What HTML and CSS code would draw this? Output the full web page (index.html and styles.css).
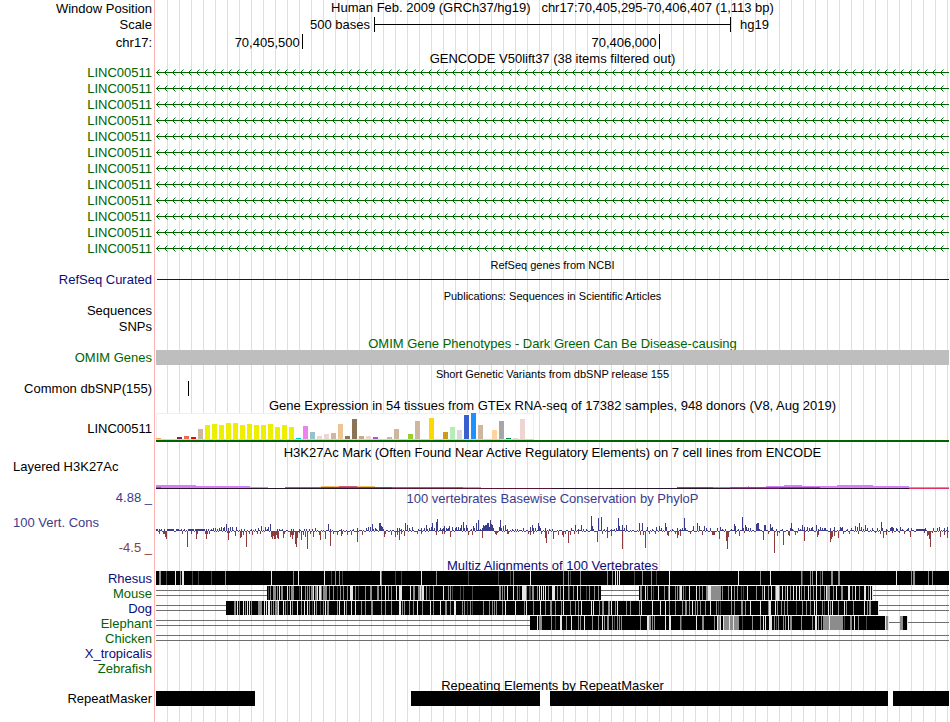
FILE: index.html
```html
<!DOCTYPE html>
<html lang="en">
<head>
  <meta charset="UTF-8">
  <meta name="viewport" content="width=device-width, initial-scale=1.0">
  <title>Human hg19 chr17:70,405,295-70,406,407</title>
  <link rel="stylesheet" href="styles.css">
</head>
<body>
  <!-- Shared gene model line -->
  <svg class="defs" aria-hidden="true">
    <defs>
      <pattern id="chevrons" x="155" y="0" width="8" height="16" patternUnits="userSpaceOnUse">
        <path d="M2 7h1v3h-1zM3 6h1v1h-1zM3 10h1v1h-1z" fill="#006400"/>
        <path d="M4 5h1v1h-1zM4 11h1v1h-1z" fill="#78b478"/>
      </pattern>
      <symbol id="intron" viewBox="156 0 793 16" preserveAspectRatio="none">
        <rect x="156" y="0" width="793" height="16" fill="url(#chevrons)"/>
        <rect x="156" y="8" width="793" height="1" fill="#006400"/>
      </symbol>
    </defs>
  </svg>

  <main class="browser">
    <!-- Ruler -->
    <div class="row position-row">
      <div class="label">Window Position</div>
      <div class="title">Human Feb. 2009 (GRCh37/hg19) &nbsp; chr17:70,405,295-70,406,407 (1,113 bp)</div>
    </div>
    <div class="row scale-row">
      <div class="label">Scale</div>
      <div class="scale">
        <span class="scale-size">500 bases</span>
        <span class="scale-bar"></span>
        <span class="scale-db">hg19</span>
      </div>
    </div>
    <div class="row chrom-row">
      <div class="label">chr17:</div>
      <div class="chrom">
        <span class="tick tick-first">70,405,500</span>
        <span class="tick tick-second">70,406,000</span>
      </div>
    </div>

    <!-- GENCODE -->
    <div class="row gencode-title">
      <div class="title">GENCODE V50lift37 (38 items filtered out)</div>
    </div>
    <div id="gencode"></div>

    <!-- RefSeq -->
    <div class="row title-row tight">
      <div class="title small">RefSeq genes from NCBI</div>
    </div>
    <div class="row gene-row">
      <div class="label navy">RefSeq Curated</div>
      <svg viewBox="156 0 793 16" preserveAspectRatio="none"><rect x="157" y="8" width="792" height="1" fill="#0c0c78"/></svg>
    </div>

    <!-- Publications -->
    <div class="row title-row tight">
      <div class="title small">Publications: Sequences in Scientific Articles</div>
    </div>
    <div class="row gene-row"><div class="label">Sequences</div></div>
    <div class="row gene-row"><div class="label">SNPs</div></div>

    <!-- OMIM -->
    <div class="row title-row">
      <div class="title green">OMIM Gene Phenotypes - Dark Green Can Be Disease-causing</div>
    </div>
    <div class="row item-row">
      <div class="label green">OMIM Genes</div>
      <div class="omim-bar"></div>
    </div>

    <!-- dbSNP -->
    <div class="row title-row">
      <div class="title small">Short Genetic Variants from dbSNP release 155</div>
    </div>
    <div class="row item-row">
      <div class="label">Common dbSNP(155)</div>
      <svg viewBox="156 0 793 15" preserveAspectRatio="none"><rect x="188" y="0" width="1" height="15"/></svg>
    </div>

    <!-- GTEx -->
    <div class="row title-row loose">
      <div class="title">Gene Expression in 54 tissues from GTEx RNA-seq of 17382 samples, 948 donors (V8, Aug 2019)</div>
    </div>
    <div class="row gtex-row">
      <div class="label">LINC00511</div>
      <svg id="gtex" viewBox="156 0 793 29" preserveAspectRatio="none"></svg>
    </div>

    <!-- H3K27Ac -->
    <div class="row title-row h3k-title">
      <div class="title">H3K27Ac Mark (Often Found Near Active Regulatory Elements) on 7 cell lines from ENCODE</div>
    </div>
    <div class="row h3k-row">
      <div class="label left">Layered H3K27Ac</div>
      <svg id="h3k27ac" viewBox="156 0 793 29" preserveAspectRatio="none"></svg>
    </div>

    <!-- Conservation -->
    <div class="row title-row loose">
      <div class="label blue">4.88 _</div>
      <div class="title blue">100 vertebrates Basewise Conservation by PhyloP</div>
    </div>
    <div class="row phylop-row">
      <div class="phylop-labels">
        <div class="label left blue">100 Vert. Cons</div>
        <div class="label red">-4.5 _</div>
      </div>
      <svg id="phylop" viewBox="156 0 793 50" preserveAspectRatio="none"></svg>
    </div>

    <!-- Multiz -->
    <div class="row title-row tight">
      <div class="title navy">Multiz Alignments of 100 Vertebrates</div>
    </div>
    <div class="row item-row">
      <div class="label navy">Rhesus</div>
      <svg id="rhesus" viewBox="156 0 793 15" preserveAspectRatio="none"></svg>
    </div>
    <div class="row item-row">
      <div class="label green">Mouse</div>
      <svg id="mouse" viewBox="156 0 793 15" preserveAspectRatio="none"></svg>
    </div>
    <div class="row item-row">
      <div class="label navy">Dog</div>
      <svg id="dog" viewBox="156 0 793 15" preserveAspectRatio="none"></svg>
    </div>
    <div class="row item-row">
      <div class="label green">Elephant</div>
      <svg id="elephant" viewBox="156 0 793 15" preserveAspectRatio="none"></svg>
    </div>
    <div class="row item-row">
      <div class="label green">Chicken</div>
      <svg id="chicken" viewBox="156 0 793 15" preserveAspectRatio="none"></svg>
    </div>
    <div class="row item-row"><div class="label navy">X_tropicalis</div></div>
    <div class="row item-row"><div class="label green">Zebrafish</div></div>

    <!-- RepeatMasker -->
    <div class="row title-row tight">
      <div class="title">Repeating Elements by RepeatMasker</div>
    </div>
    <div class="row item-row">
      <div class="label">RepeatMasker</div>
      <svg viewBox="156 0 793 15" preserveAspectRatio="none">
        <path d="M156 0h99v15h-99zM411 0h129v15h-129zM550 0h338v15h-338zM893 0h56v15h-56z"/>
      </svg>
    </div>
  </main>
  <script src="script.js"></script>
</body>
</html>
```

FILE: styles.css
```css
* {
  margin: 0;
  padding: 0;
  box-sizing: border-box;
}

body {
  font-family: "Liberation Sans", Arial, Helvetica, sans-serif;
  font-size: 13px;
  line-height: 15px;
  color: #000;
  background-color: #fff;
}

.defs {
  position: absolute;
  width: 0;
  height: 0;
}

/* Guide lines: red edge of the label column, then one blue line every 12px */
.browser {
  padding: 0 1px 16px 0;
  overflow: hidden;
  background:
    linear-gradient(#fff, #fff) 0 0 / 154px 100% no-repeat,
    linear-gradient(#ffb4b4, #ffb4b4) 154px 0 / 1px 100% no-repeat,
    linear-gradient(#fff, #fff) 155px 0 / 12px 100% no-repeat,
    repeating-linear-gradient(to right, #fff 0, #fff 11px, #dcdcfa 11px, #dcdcfa 12px);
}

.row {
  display: grid;
  grid-template-columns: 156px minmax(0, 1fr);
  align-items: center;
}

.row svg {
  display: block;
  grid-column: 2;
  width: 100%;
  height: 100%;
  shape-rendering: crispEdges;
}

.label {
  padding-right: 4px;
  text-align: right;
  white-space: nowrap;
}

.label.left {
  padding-left: 13px;
  text-align: left;
}

.title {
  grid-column: 2;
  text-align: center;
  white-space: nowrap;
}

.title-row .title {
  padding-top: 2px;
}

.small {
  font-size: 11px;
}

.green {
  color: #006400;
}

.navy {
  color: #0c0c78;
}

.blue {
  color: #3c3c8c;
}

.red {
  color: #8c3c3c;
}

/* Row heights */
.position-row,
.title-row,
.gene-row {
  height: 16px;
}

.title-row.tight,
.item-row {
  height: 15px;
}

.title-row.loose,
.scale-row {
  height: 17px;
}

.gencode-title {
  height: 13px;
}

.chrom-row,
.title-row.h3k-title {
  height: 18px;
}

.gtex-row,
.h3k-row {
  height: 29px;
}

.gtex-row .label {
  padding-top: 2px;
}

.h3k-row {
  align-items: start;
  line-height: 13px;
}

.phylop-row {
  height: 50px;
}

.phylop-labels {
  display: flex;
  flex-direction: column;
  justify-content: space-between;
  height: 100%;
  padding: 9px 0 1px;
}

/* Ruler */
.position-row {
  align-items: start;
}

.position-row .label {
  padding-top: 1px;
}

.scale {
  display: grid;
  grid-template-columns: minmax(0, 218fr) minmax(0, 357fr) minmax(0, 218fr);
  height: 100%;
  padding-top: 1px;
}

.scale-size {
  padding-right: 4px;
  text-align: right;
}

.scale-bar {
  height: 15px;
  border: solid #000;
  border-width: 0 1px;
  background: linear-gradient(#000, #000) 0 7px / 100% 1px no-repeat;
}

.scale-db {
  padding-left: 9px;
}

.chrom {
  display: flex;
  height: 100%;
}

.tick {
  height: 15px;
  margin-top: 1px;
  padding-right: 2px;
  border-right: 1px solid #000;
  line-height: 17px;
  text-align: right;
}

.tick-first {
  flex: 0 0 18.5%;
}

.tick-second {
  flex: 0 0 45%;
}

.omim-bar {
  height: 15px;
  background-color: #bebebe;
}
```

FILE: script.js
```js
const SVG_NS = 'http://www.w3.org/2000/svg';
const LEFT = 156;
const RIGHT = 949;

function rect(svg, x, y, width, height, fill) {
  const el = document.createElementNS(SVG_NS, 'rect');
  el.setAttribute('x', x);
  el.setAttribute('y', y);
  el.setAttribute('width', width);
  el.setAttribute('height', height);
  el.setAttribute('fill', fill);
  svg.appendChild(el);
}

// GENCODE transcripts
const gencode = document.getElementById('gencode');
for (let i = 0; i < 12; i++) {
  gencode.insertAdjacentHTML('beforeend',
    '<div class="row gene-row"><div class="label green">LINC00511</div>' +
    '<svg><use href="#intron"/></svg></div>');
}

// GTEx: [tissue index, height, colour]
const tissues = [
  [0, 1, '#ffa54f'], [3, 2, '#8b1c62'], [4, 3, '#ee6a50'], [5, 2, '#ff0000'], [6, 10, '#cdb79e'],
  [7, 14, '#eeee00'], [8, 15, '#eeee00'], [9, 14, '#eeee00'], [10, 16, '#eeee00'], [11, 16, '#eeee00'],
  [12, 14, '#eeee00'], [13, 15, '#eeee00'], [14, 14, '#eeee00'], [15, 14, '#eeee00'], [16, 15, '#eeee00'],
  [17, 12, '#eeee00'], [18, 14, '#eeee00'], [19, 12, '#eeee00'], [20, 1, '#00cdcd'], [21, 13, '#ee82ee'],
  [22, 7, '#9ac0cd'], [23, 3, '#eed5d2'], [24, 5, '#eed5d2'], [25, 6, '#cdb79e'], [26, 15, '#eec591'],
  [27, 3, '#8b7355'], [28, 20, '#8b7355'], [29, 3, '#cdaa7d'], [30, 3, '#eed5d2'], [31, 2, '#b452cd'],
  [33, 2, '#cdb79e'], [34, 10, '#cdb79e'], [36, 5, '#9acd32'], [37, 18, '#cdb79e'], [39, 21, '#ffd700'],
  [41, 7, '#cd9b1d'], [42, 12, '#b4eeb4'], [43, 9, '#d9d9d9'], [44, 24, '#3a5fcd'], [45, 26, '#1e90ff'],
  [46, 14, '#cdb79e'], [48, 9, '#ffd39b'], [49, 18, '#a6a6a6'], [50, 1, '#008b45'], [51, 1, '#eed5d2'],
  [52, 20, '#eed5d2']
];
const gtex = document.getElementById('gtex');
rect(gtex, LEFT, 0, 378, 27, '#f0f0f0');
rect(gtex, LEFT + 1, 1, 376, 25, '#ffffff');
rect(gtex, LEFT, 26, 378, 1, '#d3d3d3');
tissues.forEach(([i, h, fill]) => rect(gtex, LEFT + i * 7, 26 - h, 5, h, fill));
rect(gtex, LEFT, 27, RIGHT - LEFT, 2, '#006400');

// H3K27Ac: [x, y, width, height, colour]
const h3k = document.getElementById('h3k27ac');
[
  [156, 25, 40, 3, '#d27ffa'], [196, 26, 54, 2, '#d27ffa'], [250, 27, 18, 1, '#d27ffa'],
  [156, 27, 5, 1, '#5a6ed2'], [285, 27, 36, 1, '#c0506e'], [321, 26, 18, 1, '#f0be64'],
  [339, 26, 18, 1, '#d25a78'], [357, 26, 18, 1, '#f0be64'], [321, 27, 71, 1, '#70505a'],
  [392, 27, 71, 1, '#c0506e'], [463, 27, 18, 1, '#d27ffa'], [677, 27, 36, 1, '#4664b4'],
  [713, 27, 17, 1, '#a078e6'], [730, 27, 90, 1, '#6450d2'], [748, 26, 1, 1, '#d27ffa'],
  [766, 26, 18, 1, '#d27ffa'], [784, 25, 18, 2, '#d27ffa'], [802, 26, 35, 1, '#d27ffa'],
  [820, 27, 17, 1, '#d27ffa'], [837, 25, 36, 3, '#d27ffa'], [873, 26, 36, 2, '#d27ffa'],
  [909, 27, 40, 1, '#d27ffa'],
  [156, 28, 753, 1, '#281428'], [392, 28, 160, 1, '#5a1432'], [730, 28, 50, 1, '#5a1450'],
  [909, 28, 40, 1, '#dc3264']
].forEach(r => rect(h3k, ...r));

// PhyloP scores: x:height pairs above and below the zero line
const conserved = `156:2 157:2 159:2 161:2 164:2 167:2 168:2 169:2 170:2 171:2 172:2 173:2 176:2 177:2 178:2 181:2
184:2 188:2 189:2 190:2 191:2 192:2 193:2 195:2 196:2 197:2 198:2 199:2 200:2 201:2 202:2 203:2 204:2 206:2 208:2
211:2 213:3 215:3 217:2 219:3 221:4 223:3 224:4 226:7 228:3 230:4 232:4 236:4 241:2 244:2 251:2 255:2 258:3 261:5
265:4 267:2 268:4 270:7 277:2 279:2 282:2 291:2 293:2 299:2 304:2 306:2 309:2 312:2 315:3 328:7 330:2 341:2 353:2
357:3 366:3 368:4 370:4 372:7 373:2 375:3 376:2 379:8 380:8 381:5 382:4 383:2 397:3 399:3 401:2 405:8 407:6 409:3
412:4 418:2 421:3 424:3 426:6 427:2 429:3 431:4 432:8 434:3 436:9 437:12 440:3 442:2 443:3 444:5 446:3 447:2 448:3
449:5 452:4 455:3 456:4 458:4 460:3 461:6 463:9 464:3 466:6 467:3 471:2 473:5 474:3 476:8 478:11 480:2 482:3 483:6
484:5 485:6 486:6 487:8 488:8 489:4 490:11 491:7 492:6 493:3 499:4 500:11 501:3 503:5 505:6 507:2 512:2 515:2 517:2
523:3 530:4 532:6 533:3 535:3 538:8 539:5 540:3 545:3 549:2 552:2 571:3 575:6 578:2 581:6 583:2 586:2 591:15 592:5
593:2 598:13 601:14 604:2 607:4 611:2 614:2 616:3 618:13 619:5 622:6 624:3 626:6 639:8 642:8 647:4 652:2 656:4 659:5
661:3 665:8 666:4 672:2 677:3 680:2 682:3 684:13 685:3 693:5 697:8 699:5 704:5 706:3 710:3 717:3 720:4 722:2 725:2
731:2 734:7 735:5 738:2 742:14 743:3 745:6 746:4 748:3 750:3 756:7 757:8 758:8 759:2 764:6 765:6 770:7 771:3 772:4
776:2 782:2 790:3 791:8 792:2 798:3 800:2 802:6 804:4 807:4 809:3 811:3 812:4 816:6 818:2 820:4 822:3 824:3 825:3
830:3 834:4 840:4 841:3 842:4 847:2 851:3 855:5 857:4 859:8 861:4 863:2 865:6 867:3 872:3 877:3 881:9 882:3 886:2
890:3 891:4 892:4 893:3 896:3 897:2 900:4 902:2 907:2 908:3 911:3 916:2 917:2 918:2 919:2 920:2 921:2 922:2 923:2
924:2 925:3 933:3 937:3 939:4 944:3 947:4`;
const accelerated = `159:3 163:3 164:3 165:6 166:8 182:3 187:16 191:3 196:8 197:3 205:3 206:8 207:3 209:3 227:2 228:9
229:2 235:5 240:7 241:6 243:4 246:16 249:3 252:4 257:3 260:3 271:6 272:8 273:5 274:8 275:8 276:4 277:7 278:8 283:7
284:3 290:6 291:4 292:8 293:4 295:13 296:16 297:7 299:2 301:9 303:4 305:6 307:18 310:3 313:6 319:4 320:9 325:8
330:15 333:3 337:4 341:5 342:3 347:4 351:4 357:11 362:4 384:6 385:3 391:4 395:6 397:4 399:9 401:3 404:5 417:3 421:3
436:4 442:3 444:3 450:6 468:4 472:4 482:7 495:3 496:4 497:2 507:3 508:3 528:3 530:4 533:3 541:3 545:7 546:12 548:3
553:8 558:4 562:4 563:6 565:3 568:12 570:4 574:3 578:3 597:11 602:3 607:7 611:5 622:18 640:4 643:4 645:17 649:3
655:3 667:4 668:5 675:3 677:7 678:4 680:5 690:3 702:4 712:4 713:4 714:4 719:8 726:10 727:18 728:6 735:3 739:5 744:2
763:9 768:3 774:22 777:5 779:2 783:14 788:4 789:5 795:4 797:2 804:10 817:6 818:4 830:11 831:8 832:6 834:5 838:7
843:3 849:3 858:3 875:2 880:3 883:7 886:4 892:2 899:2 904:3 910:6 924:2 927:5 928:4 929:8 930:16 932:2 940:6 944:4
947:7`;

const parseScores = text => new Map(text.trim().split(/\s+/).map(p => p.split(':').map(Number)));
const phylop = document.getElementById('phylop');
const up = parseScores(conserved);
const down = parseScores(accelerated);
// near-zero positions still get a one pixel mark on either side
const flat = 'bbrbrrbbrrbrbbrrrbrb';
for (let x = LEFT; x < RIGHT; x++) {
  const mark = flat[x % flat.length];
  const h = up.get(x) || (!down.has(x) && mark === 'b' ? 1 : 0);
  const d = down.get(x) || (!up.has(x) && mark === 'r' ? 1 : 0);
  if (h) rect(phylop, x, 25 - h, 1, h, '#3c3c8c');
  if (d) rect(phylop, x, 25, 1, d, '#8c3c3c');
}

// Multiz: blocks are [start, end]; marks are x, optional *width, then w/g/d for white, gray, dark
const SHADES = { w: '#e6e6e6', g: '#8c8c8c', d: '#464646' };
const alignments = {
  rhesus: {
    blocks: [[156, 949]],
    marks: `159*2g 166d 175w 180g 182*2w 192d 198d 211d 225g 271w 293g 298w 324w 331d 335g 339g 342d 380w 381g 395d
      401d 421w 436g 468d 498d 510d 513g 530w 563g 568g 570d 580g 607g 612g 615w 617w 619w 634d 642g 651g 656d 669w
      738w 760g 770w 801g 802d 810g 812g 816w 820d 822g 831*2g 838*2g 896w 911g 913*2g 928g 932g`
  },
  mouse: {
    blocks: [[267, 601], [639, 873]],
    double: [[156, 267], [601, 639], [873, 949]],
    marks: `268d 270g 273*3g 277g 279w 281*2g 287w 289g 291*3g 299d 301w 305g 307g 309g 311*2g 313w 315*2g 317w
      319*2w 321g 323*4g 329g 333g 337d 340g 343g 347g 350*3w 355g 358d 365g 370*2g 377*2g 381g 385w 388g 391g 396w
      399*3w 410w 413*2g 418*5g 420w 422*2w 426g 429d 433g 443w 448g 450g 452d 460d 463d 472d 499*2g 502g 504g 507w
      513w 517g 519d 522*4w 526g 529d 530d 532*2g 537g 539w 541w 543w 545w 548g 552*3w 557g 560g 563w 568g 569d 573g
      577w 580g 586d 589g 594g 598g 640*2g 645w 647g 651g 653d 658w 664g 668g 669w 675g 677g 679g 680*2w 683g 685d
      689w 696w 699g 702g 706*2g 708*3w 711*10g 722g 728g 731w 734g 737g 741d 743d 747w 756g 762g 764w 768g 771w
      775g 776*3w 779g 782w 785g 787w 790g 793w 796w 799w 801g 804g 808w 810g 813g 816w 820g 824g 826w 827*3g 833g
      836w 841*2g 848*2w 852g 855w 859g 864*2w 868g 870w 872w`
  },
  dog: {
    blocks: [[226, 879]],
    double: [[156, 226], [879, 949]],
    marks: `234*2g 237w 239g 243w 245g 247w 249w 251g 258*4g 264w 266w 268*2w 271g 273g 275*3g 278w 283w 285g 287d
      290w 292g 297w 301g 304w 307w 309g 312d 314w 316g 320d 323g 325w 327*2g 337g 339w 344w 346g 351w 355w 361g 365g
      371*2g 381g 385g 391g 399*2w 402g 404g 409g 413g 417w 422g 430w 433g 440w 445*2g 450g 454*2w 462g 464g 467d
      470g 472d 483g 489g 492g 494g 496g 502g 505w 515w 524g 526w 533g 540w 545g 550*2g 555g 561g 563w 570g 575g 578g
      581w 591w 593w 599g 602*2g 608*2g 611w 615g 617w 626g 630g 639g 641w 652w 660w 665w 669g 675g 682g 685*2g 689g
      692w 695g 697g 700g 705g 710w 716g 718d 720d 731g 734g 741*2g 745g 750w 760w 768g 769*2w 775w 777g 781g 784g
      787g 796d 802g 806g 810g 814w 816w 822g 824d 828w 830g 832w 838g 844w 846g 853g 864w 867g 869*2g 878w`
  },
  elephant: {
    blocks: [[530, 889], [900, 908]],
    double: [[156, 530]],
    single: [[889, 900], [908, 949]],
    marks: `537w 539*2g 541g 551g 555d 560*2w 566g 571w 578g 580g 584w 592g 598g 602w 604g 607*2g 612g 614d 617g
      619g 621g 640g 647*2w 649*2g 652g 654g 665w 669*2w 680g 681d 696w 702*2g 714g 717w 718*2g 720w 723w 724*5g 729w
      730*3g 733w 734*5g 742d 752g 760g 763w 765w 769*3w 774g 776d 778g 783g 785g 788w 790*2g 801g 812g 815*2w 818g
      821g 823*6g 829w 830*13g 844d 850*2g 854w 858g 866d 885w 886*2g 888w 900*3g 907w`
  },
  chicken: { blocks: [], double: [[156, 949]], marks: '' }
};

Object.keys(alignments).forEach(id => {
  const svg = document.getElementById(id);
  const { blocks, double = [], single = [], marks } = alignments[id];
  double.forEach(([a, b]) => {
    rect(svg, a, 4, b - a, 1, '#6e6e6e');
    rect(svg, a, 9, b - a, 1, '#6e6e6e');
  });
  single.forEach(([a, b]) => rect(svg, a, 6, b - a, 1, '#6e6e6e'));
  blocks.forEach(([a, b]) => rect(svg, a, 0, b - a, 14, '#000000'));
  for (const m of marks.matchAll(/(\d+)(?:\*(\d+))?([wgd])/g)) {
    rect(svg, +m[1], 0, +(m[2] || 1), 14, SHADES[m[3]]);
  }
});
```
